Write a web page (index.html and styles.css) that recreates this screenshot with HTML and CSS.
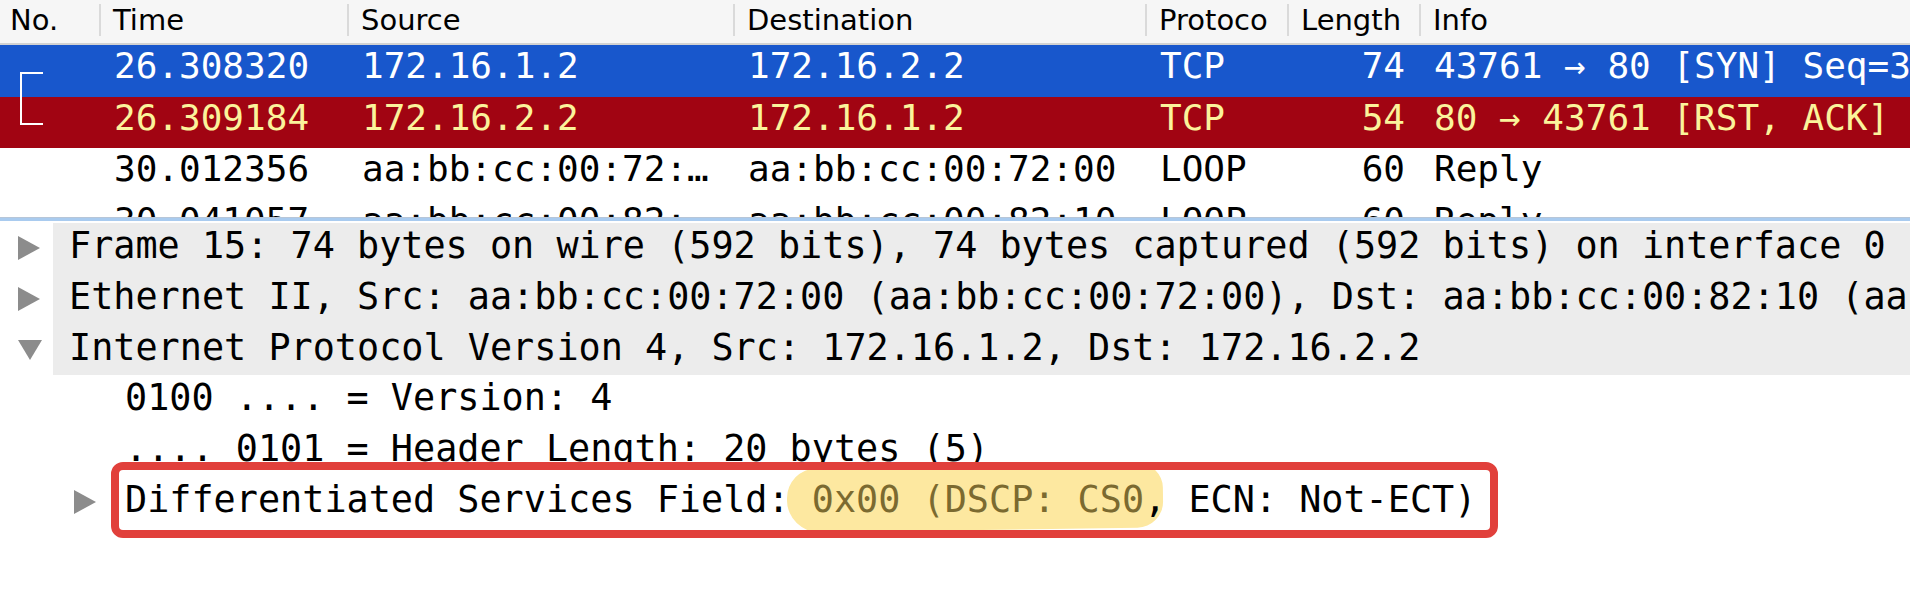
FILE: index.html
```html
<!DOCTYPE html>
<html>
<head>
<meta charset="utf-8">
<title>Wireshark</title>
<link rel="stylesheet" href="styles.css">
</head>
<body>
<div class="app">
  <div class="list">
    <div class="hdr cols">
      <div class="hc first">No.</div>
      <div class="hc">Time</div>
      <div class="hc">Source</div>
      <div class="hc">Destination</div>
      <div class="hc">Protoco</div>
      <div class="hc">Length</div>
      <div class="hc">Info</div>
    </div>
    <div class="row cols sel">
      <div class="c no"><span class="brk-start"></span></div>
      <div class="c">26.308320</div>
      <div class="c">172.16.1.2</div>
      <div class="c">172.16.2.2</div>
      <div class="c">TCP</div>
      <div class="c len">74</div>
      <div class="c">43761 → 80 [SYN] Seq=3 Win=29200 Len=0</div>
    </div>
    <div class="row cols rst">
      <div class="c no"><span class="brk-end"></span></div>
      <div class="c">26.309184</div>
      <div class="c">172.16.2.2</div>
      <div class="c">172.16.1.2</div>
      <div class="c">TCP</div>
      <div class="c len">54</div>
      <div class="c">80 → 43761 [RST, ACK] Seq=1 Ack=1 Win=0 Len=0</div>
    </div>
    <div class="row cols">
      <div class="c no"></div>
      <div class="c">30.012356</div>
      <div class="c">aa:bb:cc:00:72:…</div>
      <div class="c">aa:bb:cc:00:72:00</div>
      <div class="c">LOOP</div>
      <div class="c len">60</div>
      <div class="c">Reply</div>
    </div>
    <div class="row cols">
      <div class="c no"></div>
      <div class="c">30.041057</div>
      <div class="c">aa:bb:cc:00:82:…</div>
      <div class="c">aa:bb:cc:00:82:10</div>
      <div class="c">LOOP</div>
      <div class="c len">60</div>
      <div class="c">Reply</div>
    </div>
  </div>
  <div class="split"></div>
  <div class="details">
    <div class="node top">
      <span class="tw"><svg class="tri" width="22" height="24" viewBox="0 0 22 24"><polygon points="0,0 22,12 0,24"/></svg></span>
      <span class="lbl">Frame 15: 74 bytes on wire (592 bits), 74 bytes captured (592 bits) on interface 0</span>
    </div>
    <div class="node top">
      <span class="tw"><svg class="tri" width="22" height="24" viewBox="0 0 22 24"><polygon points="0,0 22,12 0,24"/></svg></span>
      <span class="lbl">Ethernet II, Src: aa:bb:cc:00:72:00 (aa:bb:cc:00:72:00), Dst: aa:bb:cc:00:82:10 (aa:bb:cc:00:82:10)</span>
    </div>
    <div class="node top">
      <span class="tw"><svg class="tri" width="24" height="20" viewBox="0 0 24 20"><polygon points="0,0 24,0 12,20"/></svg></span>
      <span class="lbl">Internet Protocol Version 4, Src: 172.16.1.2, Dst: 172.16.2.2</span>
    </div>
    <div class="node child">
      <span class="tw"></span>
      <span class="lbl">0100 .... = Version: 4</span>
    </div>
    <div class="node child">
      <span class="tw"></span>
      <span class="lbl">.... 0101 = Header Length: 20 bytes (5)</span>
    </div>
    <div class="node child">
      <span class="tw"><svg class="tri" width="22" height="24" viewBox="0 0 22 24"><polygon points="0,0 22,12 0,24"/></svg></span>
      <span class="lbl"><span class="mark">Differentiated Services Field: <span class="hl">0x00 (DSCP: CS0</span>, ECN: Not-ECT)</span></span>
    </div>
  </div>
</div>
</body>
</html>
```

FILE: styles.css
```css
html, body {
  margin: 0;
  padding: 0;
  background: #ffffff;
}

.app {
  width: 1910px;
  height: 616px;
  overflow: hidden;
  display: flex;
  flex-direction: column;
}

.list {
  height: 217px;
  overflow: hidden;
  flex: none;
}

.cols {
  display: grid;
  grid-template-columns: 99px 248px 386px 412px 142px 132px 1fr;
}

.hdr {
  height: 43px;
  background: #f6f6f6;
  border-bottom: 2px solid #d2d2d2;
  font-family: "DejaVu Sans", sans-serif;
  font-size: 29px;
  color: #000;
}

.hc {
  margin: 4px 0 7px 0;
  height: 32px;
  line-height: 32px;
  border-left: 2px solid #dadada;
  padding-left: 12px;
  white-space: nowrap;
  overflow: hidden;
}

.hc.first {
  border-left: none;
  padding-left: 10px;
}

.row {
  height: 51.5px;
  font-family: "DejaVu Sans Mono", monospace;
  font-size: 36px;
  color: #000;
  background: #fff;
}

.c {
  line-height: 41.5px;
  padding-left: 15px;
  white-space: nowrap;
  overflow: hidden;
}

.c.len {
  text-align: right;
  padding-left: 0;
  padding-right: 14px;
}

.c.no {
  padding-left: 20px;
  display: flex;
  flex-direction: column;
}

.row.sel {
  background: #1857cc;
  color: #ffffff;
}

.row.rst {
  background: #a10412;
  color: #fbf39b;
}

.brk-start {
  display: block;
  width: 21px;
  margin-top: 27px;
  flex: 1;
  border-top: 2px solid #ffffff;
  border-left: 2px solid #ffffff;
}

.brk-end {
  display: block;
  width: 21px;
  height: 26px;
  border-bottom: 2px solid #ffffff;
  border-left: 2px solid #ffffff;
}

.split {
  flex: none;
  height: 3px;
  border-top: 1px solid #b7c6d8;
  background: #a9cbef;
}

.details {
  padding-top: 2px;
  font-family: "DejaVu Sans Mono", monospace;
  font-size: 36.8px;
  color: #000;
}

.node {
  display: flex;
  height: 50.75px;
}

.node.child {
  margin-left: 56px;
}

.tw {
  flex: none;
  width: 35px;
  padding-left: 18px;
  display: flex;
  align-items: center;
}

.tri {
  fill: #8c8c8c;
  display: block;
}

.lbl {
  flex: 1;
  padding-left: 16px;
  line-height: 46.75px;
  white-space: nowrap;
  overflow: hidden;
}

.node.top .lbl {
  background: #ececec;
}

.node.child .lbl {
  overflow: visible;
}

.mark {
  position: relative;
  z-index: 0;
}

.mark::after {
  content: "";
  position: absolute;
  left: -14px;
  right: -22px;
  top: -16px;
  bottom: -17px;
  border: 8px solid #e1403b;
  border-radius: 12px;
}

.hl {
  position: relative;
  color: #7b6a30;
}

.hl::before {
  content: "";
  position: absolute;
  left: -25px;
  right: -19px;
  top: -12px;
  bottom: -9px;
  background: #fde8a0;
  border-radius: 30px 24px 26px 32px;
  transform: rotate(-0.8deg);
  z-index: -1;
}
```
